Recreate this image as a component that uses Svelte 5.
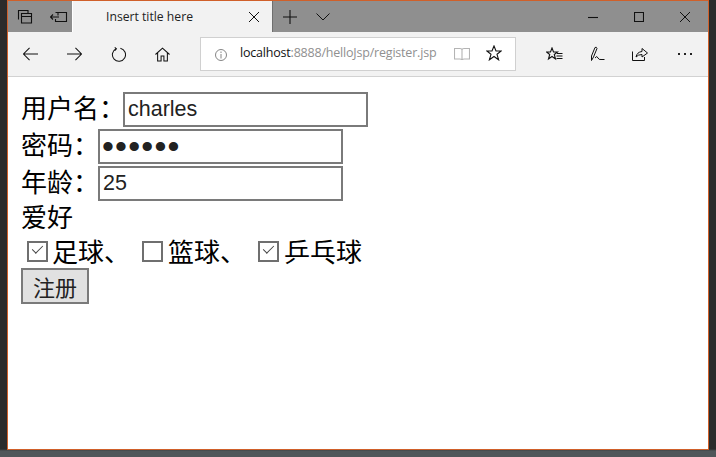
<script>
  let name = 'charles';
  let password = '123456';
  let age = '25';
</script>

<div class="desktop">
  <div class="side"></div>
  <div class="window">
    <div class="titlebar">
      <div class="tab-tools">
        <svg width="16" height="16" viewBox="0 0 16 16" class="ico">
          <path d="M1.500 10.500V1.500H11V4M4.500 4.500H14.500V14H4.500ZM4.500 7.500H14.500" />
        </svg>
        <svg width="18" height="14" viewBox="0 0 18 14" class="ico">
          <path d="M5.500 2.500H16.500V11.500H5.500V9M8 2.500V5.500M0.500 7H9M3 4.500L0.500 7L3 9.500" />
        </svg>
      </div>
      <div class="tab">
        <span class="tab-title">Insert title here</span>
        <svg width="12" height="12" viewBox="0 0 12 12" class="ico thin"><path d="M1 1L11 11M11 1L1 11" /></svg>
      </div>
      <div class="tab-actions">
        <svg width="14" height="14" viewBox="0 0 14 14" class="ico"><path d="M7 0V14M0 7H14" /></svg>
        <svg width="14" height="8" viewBox="0 0 14 8" class="ico thin"><path d="M0.500 0.500L7 7L13.500 0.500" /></svg>
      </div>
      <div class="controls">
        <svg width="10" height="10" viewBox="0 0 10 10" class="ico"><path d="M0 5.500H10" /></svg>
        <svg width="10" height="10" viewBox="0 0 10 10" class="ico"><path d="M0.500 0.500H9.500V9.500H0.500Z" /></svg>
        <svg width="10" height="10" viewBox="0 0 10 10" class="ico thin"><path d="M0 0L10 10M10 0L0 10" /></svg>
      </div>
    </div>

    <div class="toolbar">
      <div class="nav">
        <svg width="15" height="14" viewBox="0 0 16 14" class="ico"><path d="M0.500 7H16M7 0.500L0.500 7L7 13.500" /></svg>
        <svg width="15" height="14" viewBox="0 0 16 14" class="ico"><path d="M0 7H15.500M9 0.500L15.500 7L9 13.500" /></svg>
        <svg width="15" height="15" viewBox="0 0 16 16" class="ico"><path d="M5.500 1.800A7 7 0 1 0 10 1.300M4 0.500L5.800 2L4 4" /></svg>
        <svg width="15" height="15" viewBox="0 0 16 15" class="ico"><path d="M0.500 7.500L8 0.800L15.500 7.500M2.800 6V14.500H6.500V9H9.500V14.500H13.200V6" /></svg>
      </div>
      <div class="address">
        <svg width="12" height="12" viewBox="0 0 12 12" class="ico info">
          <circle cx="6" cy="6" r="5.500" />
          <path d="M6 5V9.500M6 2.500V4" />
        </svg>
        <span class="url"><b>localhost</b>:8888/helloJsp/register.jsp</span>
        <svg width="16" height="14" viewBox="0 0 16 14" class="ico book">
          <path d="M0.500 1.500H6Q8 1.500 8 3V13Q8 12 6 12H0.500ZM15.500 1.500H10Q8 1.500 8 3V13Q8 12 10 12H15.500Z" />
        </svg>
        <svg width="16" height="16" viewBox="0 0 16 16" class="ico star">
          <path d="M8 1L10 6H15.200L11 9.300L12.600 14.800L8 11.500L3.400 14.800L5 9.300L0.800 6H6Z" />
        </svg>
      </div>
      <div class="hub">
        <svg width="17" height="15" viewBox="0 0 17 15" class="ico">
          <path d="M6 1L7.500 5H11.500L8.300 7.500L9.500 12L6 9.500L2.500 12L3.700 7.500L0.500 5H4.500ZM11 6.500H16.500M10.500 9H16.500M10.500 11.500H16.500" />
        </svg>
        <svg width="15" height="16" viewBox="0 0 15 16" class="ico thin">
          <path d="M1.500 14.500L1.500 10L5 1.500Q6.500 0.500 7 2.500L3.500 11L1.500 14.500M5 12Q7 9 8 12Q9 14 11 13.500L14.500 13.500" />
        </svg>
        <svg width="16" height="15" viewBox="0 0 16 15" class="ico thin">
          <path d="M0.500 4.500V13.500H12.500V10M4 10Q5 5 10 4.500V1.500L15.500 6L10 10V7.500Q6 7.500 4 10" />
        </svg>
        <div class="dots"><i></i><i></i><i></i></div>
      </div>
    </div>

    <form class="page">
      <div class="row">
        <label class="long" for="uname">用户名：</label>
        <input id="uname" type="text" bind:value={name} />
      </div>
      <div class="row">
        <label for="pwd">密码：</label>
        <input id="pwd" class="secret" type="password" bind:value={password} />
      </div>
      <div class="row">
        <label for="age">年龄：</label>
        <input id="age" type="text" bind:value={age} />
      </div>
      <div class="hobby-title">爱好</div>
      <div class="hobbies">
        <label class="hobby"><input type="checkbox" checked />足球、</label>
        <label class="hobby"><input type="checkbox" />篮球、</label>
        <label class="hobby"><input type="checkbox" checked />乒乓球</label>
      </div>
      <button type="button" class="submit">注册</button>
    </form>
  </div>
  <div class="side right"></div>
</div>

<style>
  :global(body) {
    margin: 0;
    background: #2b2b2b;
  }

  .desktop {
    width: 716px;
    height: 457px;
    display: flex;
    align-items: flex-start;
    background: linear-gradient(#2b2b2b 449px, #4f5659 451px);
    overflow: hidden;
  }

  .side {
    width: 7px;
    flex: none;
  }

  .window {
    width: 702px;
    height: 450px;
    flex: none;
    box-sizing: border-box;
    display: flex;
    flex-direction: column;
    border: 1px solid #d0602a;
    background: #fff;
  }

  .ico {
    flex: none;
    fill: none;
    stroke: #111;
    stroke-width: 1.1;
  }

  .thin {
    stroke-width: 1;
  }

  .titlebar {
    height: 31px;
    flex: none;
    display: flex;
    background: #8f8f8f;
  }

  .tab-tools {
    width: 64px;
    display: flex;
    align-items: center;
    gap: 17px;
    padding-left: 9px;
    box-sizing: border-box;
  }

  .tab {
    width: 201px;
    box-sizing: border-box;
    display: flex;
    align-items: center;
    justify-content: space-between;
    padding: 0 12px 0 33px;
    background: #f2f2f2;
    border-left: 1px solid #fff;
    border-right: 1px solid #6f6f6f;
  }

  .tab-title {
    font: 12.200px "Open Sans", "Noto Sans", sans-serif;
    color: #222;
  }

  .tab-actions {
    display: flex;
    align-items: center;
    gap: 19px;
    padding-left: 10px;
  }

  .controls {
    margin-left: auto;
    display: flex;
    align-items: center;
    gap: 36px;
    padding-right: 18px;
  }

  .toolbar {
    height: 45px;
    flex: none;
    box-sizing: border-box;
    display: flex;
    align-items: center;
    background: #f2f2f2;
    border-bottom: 1px solid #d2d2d2;
  }

  .nav {
    width: 192px;
    display: flex;
    align-items: center;
    gap: 29px;
    padding-left: 15px;
    box-sizing: border-box;
  }

  .address {
    width: 316px;
    height: 34px;
    margin-top: -1px;
    box-sizing: border-box;
    display: flex;
    align-items: center;
    background: #fff;
    border: 1px solid #d0d0d0;
    padding-left: 14px;
  }

  .info {
    stroke: #777;
    stroke-width: 0.9;
    margin-top: 2px;
  }

  .url {
    margin-left: 13px;
    width: 204px;
    margin-top: -3px;
    font: 12.500px "Open Sans", "Noto Sans", sans-serif;
    color: #909090;
    white-space: nowrap;
    letter-spacing: -0.2px;
  }

  .url b {
    font-weight: 400;
    color: #111;
  }

  .book {
    stroke: #b4b4b4;
    margin-left: 10px;
  }

  .star {
    margin: -2px 0 0 16px;
  }

  .hub {
    display: flex;
    align-items: center;
    gap: 27px;
    padding-left: 30px;
  }

  .dots {
    display: flex;
    gap: 4px;
    margin-left: 3px;
  }

  .dots i {
    width: 2px;
    height: 2px;
    background: #222;
  }

  .page {
    padding: 14px 0 0 13px;
    font-family: "Liberation Sans", "Noto Sans CJK SC", sans-serif;
    font-size: 26px;
    color: #000;
  }

  .row {
    display: flex;
    align-items: center;
    height: 37px;
  }

  .row label {
    width: 77px;
    flex: none;
    white-space: nowrap;
    padding-bottom: 6px;
  }

  .row label.long {
    width: 102px;
  }

  .row input {
    width: 245px;
    height: 35px;
    box-sizing: border-box;
    border: 2px solid #7a7a7a;
    padding: 0 3px;
    font: 21.500px "Liberation Sans", sans-serif;
    color: #222;
    outline: none;
    background: #fff;
  }

  .row input.secret {
    font-size: 34px;
    letter-spacing: 1.200px;
    padding-left: 2px;
  }

  .hobby-title {
    height: 33px;
    line-height: 32px;
  }

  .hobbies {
    display: flex;
    height: 33px;
    align-items: center;
    gap: 12px;
    padding-left: 6px;
  }

  .hobby {
    display: flex;
    align-items: center;
    padding-bottom: 3px;
  }

  .hobby input {
    appearance: none;
    width: 21px;
    height: 21px;
    box-sizing: border-box;
    margin: 2px 5px 0 0;
    border: 2px solid #6f6f6f;
    background: #fff;
    position: relative;
  }

  .hobby:first-child input {
    margin-right: 4px;
  }

  .hobby input:checked::after {
    content: '';
    position: absolute;
    left: 3px;
    top: 2px;
    width: 10px;
    height: 5px;
    border-left: 1px solid #444;
    border-bottom: 1px solid #444;
    transform: rotate(-45deg) scale(0.95);
  }

  .submit {
    display: block;
    width: 68px;
    height: 36px;
    padding: 0;
    font: 22px "Liberation Sans", "Noto Sans CJK SC", sans-serif;
    color: #222;
    background: #e1e1e1;
    border: 2px solid #7a7a7a;
  }
</style>
